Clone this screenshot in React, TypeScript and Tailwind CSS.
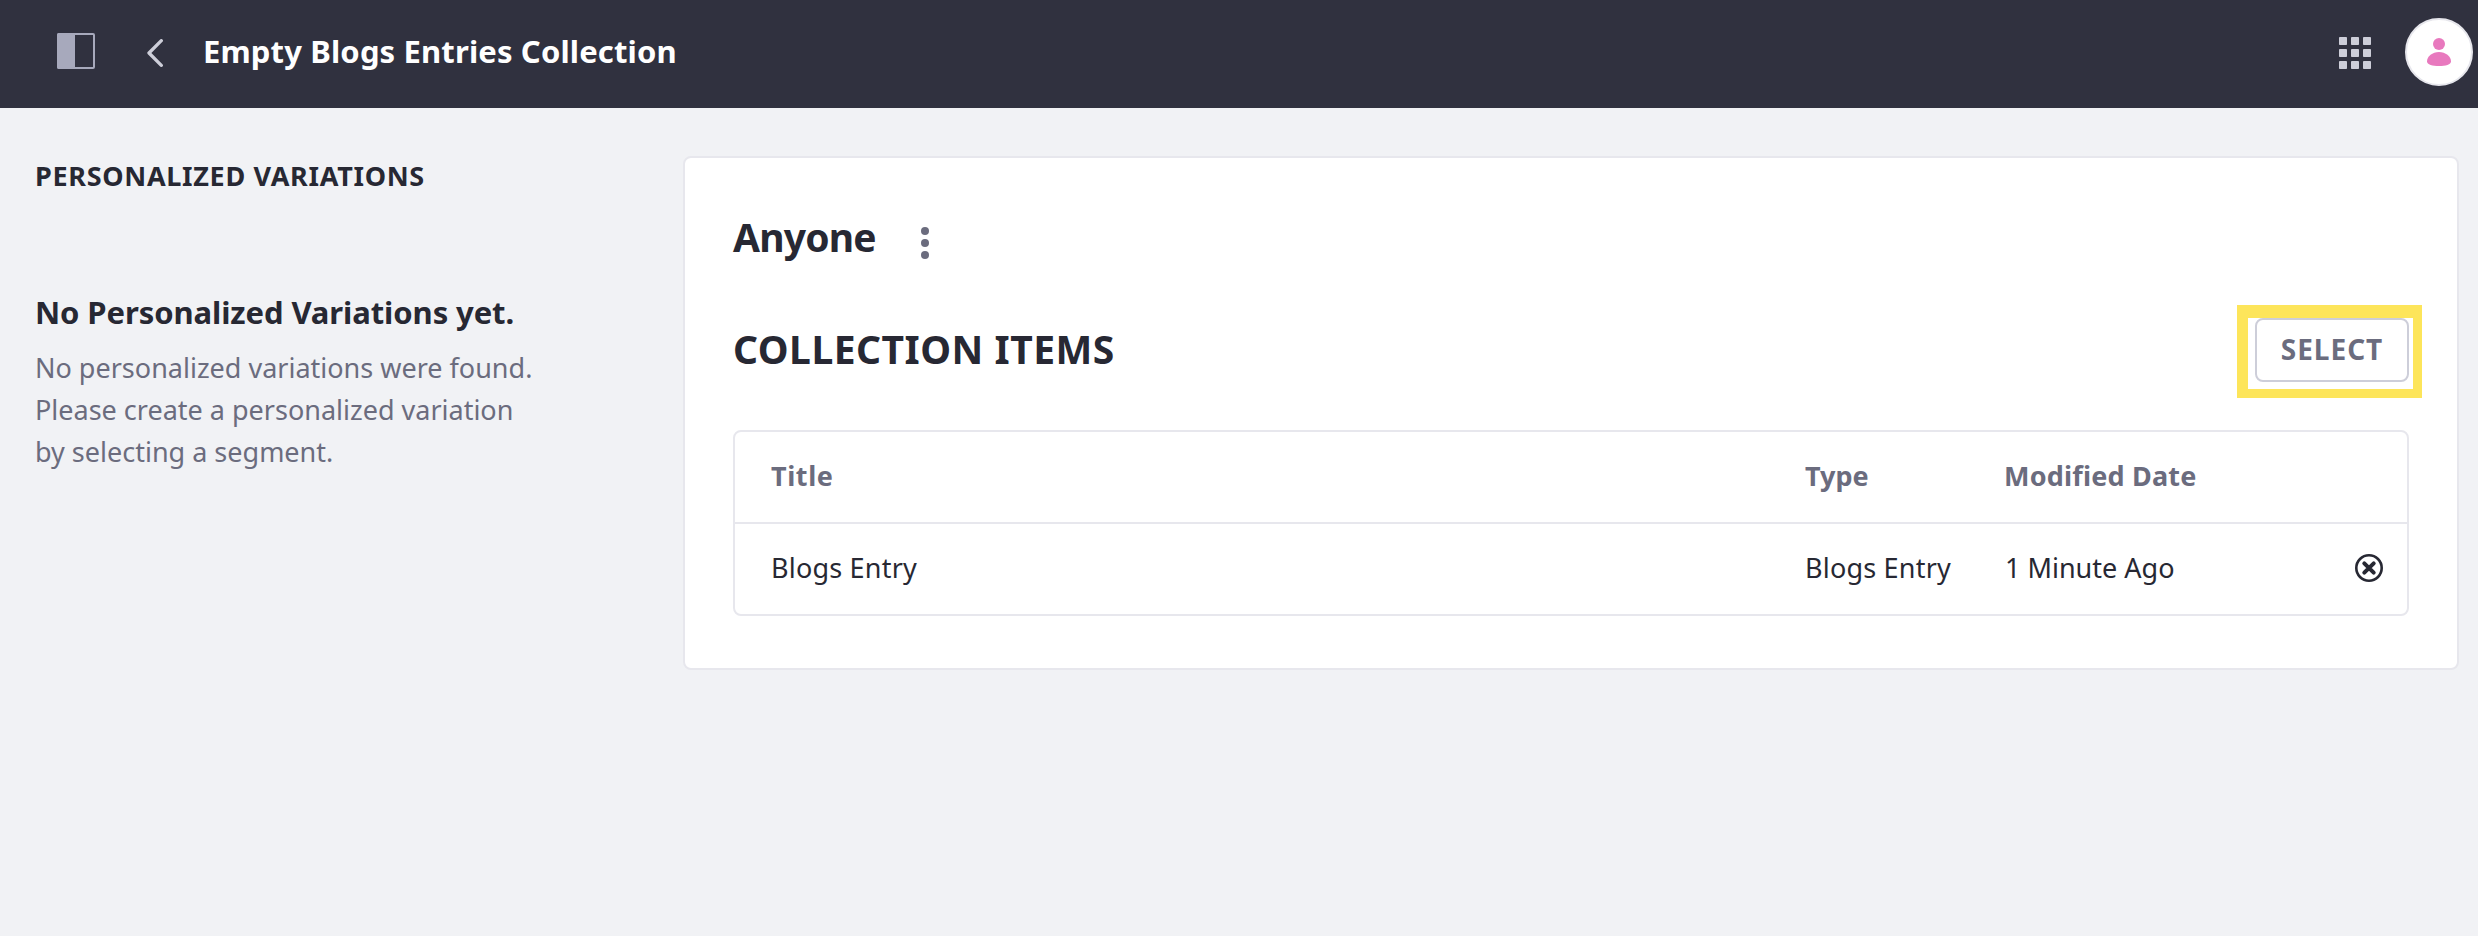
function PanelIcon() {
  return (
    <svg className="h-9 w-[38px]" viewBox="0 0 38 36" fill="none">
      <rect x="1" y="1" width="36" height="34" rx="1" stroke="#a7a9bc" strokeWidth="2" />
      <path d="M2 0H18V36H2a2 2 0 0 1-2-2V2a2 2 0 0 1 2-2Z" fill="#a7a9bc" />
    </svg>
  );
}

function BackIcon() {
  return (
    <svg className="h-7 w-4" viewBox="0 0 16 28" fill="none">
      <path
        d="M14.3 1.7L2 14L14.3 26.3"
        stroke="#cdced9"
        strokeWidth="3.3"
        strokeLinecap="round"
        strokeLinejoin="round"
      />
    </svg>
  );
}

function GridIcon() {
  return (
    <svg className="size-8" viewBox="0 0 32 32" fill="#cdced9">
      {[0, 12, 24].map((y) =>
        [0, 12, 24].map((x) => <rect key={`${x}-${y}`} x={x} y={y} width="8" height="8" rx="0.8" />),
      )}
    </svg>
  );
}

function Avatar() {
  return (
    <div className="flex size-[68px] items-center justify-center rounded-full border-2 border-[#e7e7ed] bg-white">
      <svg className="h-7 w-6" viewBox="0 0 24 28" fill="#e879be">
        <circle cx="12" cy="6" r="6" />
        <path d="M12 14C18.5 14 24 18.5 24 23.2C24 26.8 18.5 28 12 28S0 26.8 0 23.2C0 18.5 5.5 14 12 14Z" />
      </svg>
    </div>
  );
}

function KebabIcon() {
  return (
    <svg className="h-8 w-2" viewBox="0 0 8 32" fill="#6b6c7e">
      <circle cx="4" cy="4" r="4" />
      <circle cx="4" cy="16" r="4" />
      <circle cx="4" cy="28" r="4" />
    </svg>
  );
}

function RemoveIcon() {
  return (
    <svg className="size-7" viewBox="0 0 28 28" fill="none" stroke="#272833">
      <circle cx="14" cy="14" r="12.7" strokeWidth="2.6" />
      <path d="M9.3 9.3L18.7 18.7M18.7 9.3L9.3 18.7" strokeWidth="4" strokeLinecap="round" />
    </svg>
  );
}

export default function App() {
  return (
    <div className="flex h-[936px] w-full flex-col bg-[#f1f2f5] font-['Noto_Sans',sans-serif] text-[#272833]">
      <header className="flex h-[108px] shrink-0 items-center bg-[#30313f] pr-[5px] pl-[57px]">
        <div className="pb-1.5">
          <PanelIcon />
        </div>
        <div className="ml-[52px] pb-0.5">
          <BackIcon />
        </div>
        <h1 className="ml-10 pb-1.5 text-[31px] leading-[42px] font-bold tracking-[0.14px] text-white">
          Empty Blogs Entries Collection
        </h1>
        <div className="ml-auto pb-0.5">
          <GridIcon />
        </div>
        <div className="ml-[34px] pb-1">
          <Avatar />
        </div>
      </header>

      <div className="flex items-start pr-[19px]">
        <aside className="w-[683px] shrink-0 pt-[47px] pl-[35px]">
          <h2 className="text-[27px] leading-[42px] font-bold tracking-[0.69px]">
            PERSONALIZED VARIATIONS
          </h2>
          <h3 className="mt-[94px] text-[31px] leading-[42px] font-bold tracking-[-0.09px]">
            No Personalized Variations yet.
          </h3>
          <p className="mt-3.5 text-[27px] leading-[42px] text-[#6b6c7e]">
            No personalized variations were found.
            <br />
            Please create a personalized variation
            <br />
            by selecting a segment.
          </p>
        </aside>

        <main className="mt-12 h-[514px] flex-1 rounded-lg border-2 border-[#e7e7ed] bg-white px-12 pt-[55px]">
          <div className="flex h-12 items-center">
            <h2 className="w-[188px] text-[39px] leading-[48px] font-bold tracking-[-0.8px]">Anyone</h2>
            <div className="pt-3">
              <KebabIcon />
            </div>
          </div>

          <div className="mt-[57px] flex h-16 items-center justify-between">
            <h2 className="pb-0.5 text-[39px] leading-[48px] font-bold tracking-[0.5px]">
              COLLECTION ITEMS
            </h2>
            <div className="relative">
              <div className="absolute -top-[13px] -left-[18px] h-[93px] w-[185px] border-t-[13px] border-r-[9px] border-b-[9px] border-l-[11px] border-[#fde55a]" />
              <button className="flex h-16 w-[154px] items-center justify-center rounded-lg border-2 border-[#cdced9] bg-white pb-0.5 text-[28px] leading-10 font-bold tracking-[1px] text-[#6b6c7e]">
                SELECT
              </button>
            </div>
          </div>

          <div className="mt-12 rounded-lg border-2 border-[#e7e7ed]">
            <div className="flex h-[92px] items-center border-b-2 border-[#e7e7ed] pb-[3px] pl-9 text-[27px] leading-[42px] font-bold text-[#6b6c7e]">
              <div className="w-[1034px] tracking-[0.6px]">Title</div>
              <div className="w-[199px]">Type</div>
              <div className="tracking-[0.2px]">Modified Date</div>
            </div>
            <div className="flex h-[90px] items-center pr-6 pl-9 text-[27px] leading-[42px]">
              <div className="w-[1034px] pb-0.5 tracking-[0.2px]">Blogs Entry</div>
              <div className="w-[200px] pb-0.5 tracking-[0.2px]">Blogs Entry</div>
              <div className="pb-0.5">1 Minute Ago</div>
              <div className="ml-auto pb-0.5">
                <RemoveIcon />
              </div>
            </div>
          </div>
        </main>
      </div>
    </div>
  );
}
